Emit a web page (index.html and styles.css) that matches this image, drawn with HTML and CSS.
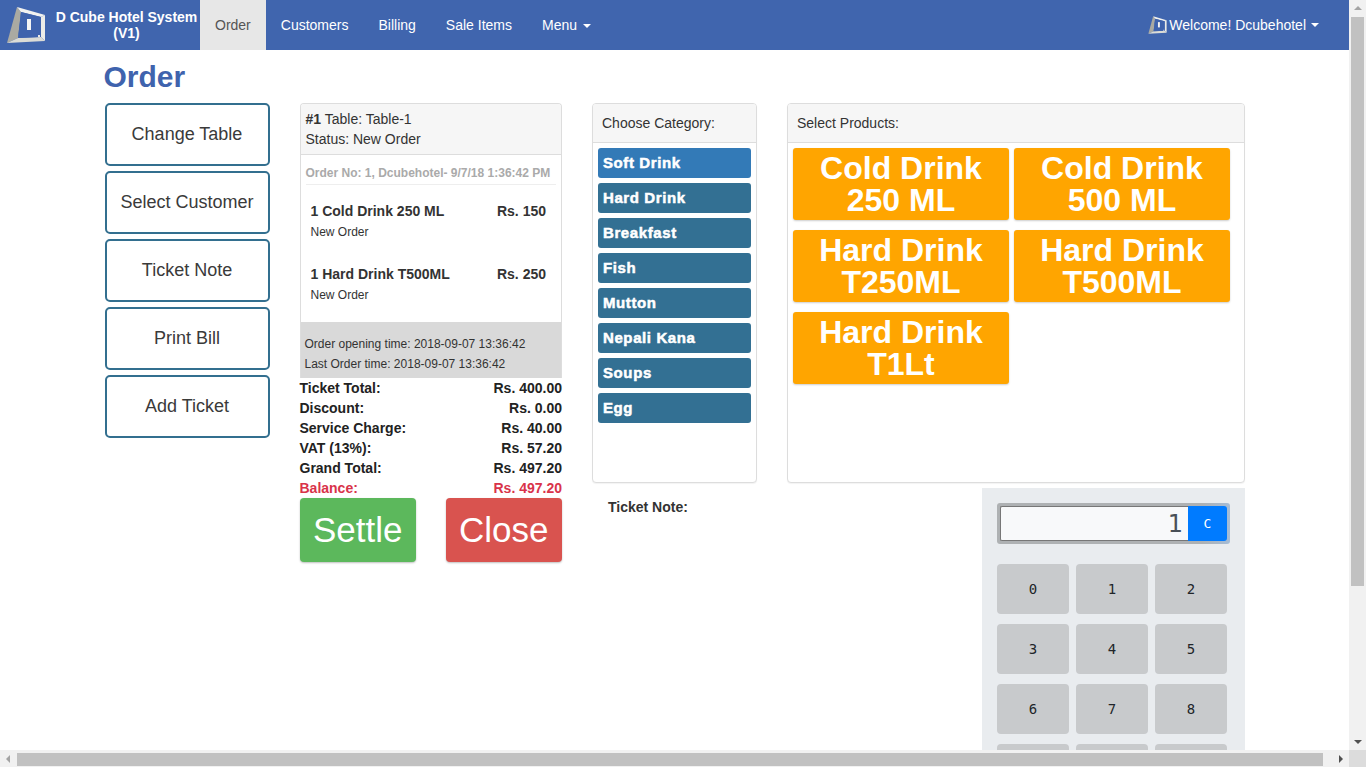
FILE: index.html
```html
<!DOCTYPE html>
<html lang="en">
<head>
    <meta charset="UTF-8">
    <title>D Cube Hotel System - Order</title>
    <link rel="stylesheet" href="styles.css">
</head>
<body>
<svg class="defs" width="0" height="0">
    <symbol id="cube" viewBox="0 0 50 50">
        <polygon points="7,43 17,7 21,12 18,38" fill="#aaaaa2"/>
        <polygon points="17,7 45,15 41,17 21,12" fill="#f2f2f0"/>
        <polygon points="45,15 45,41 41,37 41,17" fill="#ecece8"/>
        <polygon points="7,43 18,38 41,37 45,41" fill="#dcdcd6"/>
        <polygon points="21,12 41,17 41,37 18,38" fill="#3f63ad"/>
        <rect x="27" y="19" width="4" height="11" fill="#f4f4f4"/>
        <rect x="38" y="35" width="2" height="2" fill="#e8e8e8"/>
    </symbol>
</svg>

<div class="viewport">
    <header class="navbar">
        <a class="brand" href="#">
            <svg class="logo"><use href="#cube"/></svg>
            <span class="brand-name">D Cube Hotel System (V1)</span>
        </a>
        <nav class="nav-links">
            <a class="active" href="#">Order</a>
            <a href="#">Customers</a>
            <a href="#">Billing</a>
            <a href="#">Sale Items</a>
            <a href="#">Menu <span class="caret"></span></a>
        </nav>
        <a class="welcome" href="#">
            <svg class="logo-small"><use href="#cube"/></svg>
            Welcome! Dcubehotel <span class="caret"></span>
        </a>
    </header>

    <main class="container">
        <h2 class="page-title">Order</h2>
        <div class="columns">
            <div class="actions">
                <button class="action-btn">Change Table</button>
                <button class="action-btn">Select Customer</button>
                <button class="action-btn">Ticket Note</button>
                <button class="action-btn">Print Bill</button>
                <button class="action-btn">Add Ticket</button>
            </div>

            <div class="ticket">
                <div class="panel">
                    <div class="panel-heading ticket-heading">
                        <div><b>#1</b> Table: Table-1</div>
                        <div>Status: New Order</div>
                    </div>
                    <div class="order-lines">
                        <div class="order-no">Order No: 1, Dcubehotel- 9/7/18 1:36:42 PM</div>
                        <div class="line">
                            <div class="line-top"><b>1 Cold Drink 250 ML</b><b>Rs. 150</b></div>
                            <div class="line-status">New Order</div>
                        </div>
                        <div class="line">
                            <div class="line-top"><b>1 Hard Drink T500ML</b><b>Rs. 250</b></div>
                            <div class="line-status">New Order</div>
                        </div>
                    </div>
                    <div class="times">
                        <div>Order opening time: 2018-09-07 13:36:42</div>
                        <div>Last Order time: 2018-09-07 13:36:42</div>
                    </div>
                </div>
                <div class="totals">
                    <div class="total-row"><span>Ticket Total:</span><span>Rs. 400.00</span></div>
                    <div class="total-row"><span>Discount:</span><span>Rs. 0.00</span></div>
                    <div class="total-row"><span>Service Charge:</span><span>Rs. 40.00</span></div>
                    <div class="total-row"><span>VAT (13%):</span><span>Rs. 57.20</span></div>
                    <div class="total-row"><span>Grand Total:</span><span>Rs. 497.20</span></div>
                    <div class="total-row balance"><span>Balance:</span><span>Rs. 497.20</span></div>
                </div>
                <div class="ticket-buttons">
                    <button class="big-btn settle">Settle</button>
                    <button class="big-btn close">Close</button>
                </div>
            </div>

            <div class="panel category-panel">
                <div class="panel-heading">Choose Category:</div>
                <div class="category-list">
                    <button class="category selected">Soft Drink</button>
                    <button class="category">Hard Drink</button>
                    <button class="category">Breakfast</button>
                    <button class="category">Fish</button>
                    <button class="category">Mutton</button>
                    <button class="category">Nepali Kana</button>
                    <button class="category">Soups</button>
                    <button class="category">Egg</button>
                </div>
            </div>

            <div class="panel product-panel">
                <div class="panel-heading">Select Products:</div>
                <div class="product-grid">
                    <button class="product">Cold Drink 250 ML</button>
                    <button class="product">Cold Drink 500 ML</button>
                    <button class="product">Hard Drink T250ML</button>
                    <button class="product">Hard Drink T500ML</button>
                    <button class="product">Hard Drink T1Lt</button>
                </div>
            </div>

            <div class="note-label">Ticket Note:</div>

            <div class="calculator">
                <div class="display">
                    <div class="display-value">1</div>
                    <button class="clear-btn">C</button>
                </div>
                <div class="keys">
                    <button class="key">0</button>
                    <button class="key">1</button>
                    <button class="key">2</button>
                    <button class="key">3</button>
                    <button class="key">4</button>
                    <button class="key">5</button>
                    <button class="key">6</button>
                    <button class="key">7</button>
                    <button class="key">8</button>
                    <button class="key"></button>
                    <button class="key"></button>
                    <button class="key"></button>
                </div>
            </div>
        </div>
    </main>
</div>

<div class="scroll-v">
    <span class="arrow arrow-up"></span>
    <div class="thumb-v"></div>
    <span class="arrow arrow-down"></span>
</div>
<div class="scroll-h">
    <span class="arrow arrow-left"></span>
    <div class="thumb-h"></div>
    <span class="arrow arrow-right"></span>
</div>
<div class="scroll-corner"></div>
</body>
</html>
```

FILE: styles.css
```css
* {
    box-sizing: border-box;
}
html, body {
    height: 100%;
    overflow: hidden;
}
body {
    margin: 0;
    display: grid;
    grid-template-columns: 1349px 17px;
    grid-template-rows: 750px 17px;
    font-family: "Liberation Sans", Arial, sans-serif;
    font-size: 14px;
    line-height: 20px;
    color: #333;
    background: #fff;
}
button {
    font-family: inherit;
    cursor: pointer;
}
.defs {
    position: absolute;
}
.viewport {
    overflow: hidden;
}

/* scrollbars */
.scroll-v {
    display: flex;
    flex-direction: column;
    align-items: center;
    background: #f1f1f1;
}
.thumb-v {
    flex: none;
    width: 13px;
    height: 569px;
    background: #c1c1c1;
}
.scroll-h {
    display: flex;
    align-items: center;
    background: #f1f1f1;
}
.thumb-h {
    flex: none;
    width: 1306px;
    height: 13px;
    margin-top: 1px;
    background: #c1c1c1;
}
.scroll-corner {
    background: #dcdcdc;
}
.arrow {
    flex: none;
    display: flex;
    width: 17px;
    height: 17px;
}
.arrow::before {
    content: "";
    margin: auto;
    border: 4px solid transparent;
}
.arrow-up::before {
    margin-top: 2px;
    border-bottom-color: #a3a3a3;
}
.arrow-down {
    margin-top: auto;
}
.arrow-down::before {
    margin-bottom: 2px;
    border-top-color: #505050;
}
.arrow-left::before {
    margin-left: 2px;
    border-right-color: #a3a3a3;
}
.arrow-right {
    margin-left: auto;
}
.arrow-right::before {
    margin-right: 2px;
    border-left-color: #505050;
}

/* top bar */
.navbar {
    display: flex;
    align-items: stretch;
    height: 50px;
    background-color: #4065ae;
    color: #fff;
}
.navbar a {
    color: #fff;
    text-decoration: none;
}
.brand {
    display: flex;
    align-items: center;
    width: 200px;
}
.logo {
    flex: none;
    width: 50px;
    height: 50px;
}
.brand-name {
    flex: 1;
    padding-left: 3px;
    font-weight: bold;
    line-height: 16px;
    text-align: center;
}
.nav-links {
    display: flex;
}
.nav-links a {
    padding: 15px;
}
.nav-links a.active {
    background-color: #e7e7e7;
    color: #555;
}
.caret {
    display: inline-block;
    margin-left: 2px;
    vertical-align: middle;
    border-top: 4px solid;
    border-right: 4px solid transparent;
    border-left: 4px solid transparent;
}
.welcome {
    display: flex;
    align-items: center;
    gap: 4px;
    margin-left: auto;
    padding: 0 30px 0 15px;
}
.logo-small {
    width: 24px;
    height: 24px;
    margin-right: -3.5px;
}
.welcome .caret {
    margin-left: 1px;
}

/* page */
.container {
    width: 1170px;
    margin-left: 89.5px;
    padding: 0 15px;
}
.page-title {
    height: 33px;
    margin: 10px 0 10px -1px;
    font-size: 30px;
    line-height: 33px;
    font-weight: bold;
    color: #3f63ad;
}
.columns {
    display: grid;
    grid-template-columns: 165px 262.5px 165px 458px;
    grid-template-rows: 380px auto;
    column-gap: 30px;
    align-items: start;
}
.actions {
    grid-row: 1 / span 2;
    display: flex;
    flex-direction: column;
    gap: 5px;
}
.action-btn {
    height: 63px;
    background: #fff;
    border: 2px solid #336f8f;
    border-radius: 5px;
    font-size: 18px;
    color: #3a3a3a;
}
.panel {
    background: #fff;
    border: 1px solid #ddd;
    border-radius: 4px;
    box-shadow: 0 1px 1px rgba(0, 0, 0, .05);
}
.panel-heading {
    padding: 9px;
    background: #f6f6f6;
    border-bottom: 1px solid #ddd;
    border-radius: 3px 3px 0 0;
}

/* ticket column */
.ticket {
    grid-row: 1 / span 2;
}
.ticket .panel {
    border-bottom: 0;
    border-radius: 4px 4px 0 0;
    box-shadow: none;
}
.ticket-heading {
    padding: 5px;
}
.order-lines {
    height: 167px;
    padding: 0 5px;
}
.order-no {
    padding: 8px 0 1px;
    border-bottom: 1px solid #eee;
    font-size: 12px;
    font-weight: bold;
    color: #aaa;
}
.line {
    padding: 16px 5px 0;
}
.line + .line {
    padding-top: 22px;
}
.line-top {
    display: flex;
    justify-content: space-between;
    padding-right: 5px;
}
.line-status {
    margin-top: 1px;
    font-size: 12px;
}
.times {
    height: 56px;
    padding: 12px 0 0 4px;
    background: #d9d9d9;
    font-size: 12px;
}
.totals {
    font-weight: bold;
    color: #222;
}
.total-row {
    display: flex;
    justify-content: space-between;
}
.balance {
    color: #d9334a;
}
.ticket-buttons {
    display: flex;
    justify-content: space-between;
}
.big-btn {
    width: 116.5px;
    height: 64px;
    padding: 0;
    border: 1px solid transparent;
    border-radius: 4px;
    box-shadow: 0 1px 2px rgba(0, 0, 0, .25);
    font-size: 35px;
    color: #fff;
}
.settle {
    background: #5cb85c;
}
.close {
    background: #d9534f;
}

/* category column */
.category-panel {
    height: 380px;
}
.category-list {
    display: flex;
    flex-direction: column;
    gap: 5px;
    padding: 5px;
}
.category {
    height: 30px;
    padding: 0 5px 2px;
    background: #337093;
    border: 0;
    border-radius: 3px;
    font-size: 15px;
    font-weight: 900;
    letter-spacing: .6px;
    color: #fff;
    text-align: left;
    -webkit-text-stroke: .5px #fff;
}
.category.selected {
    background: #337ab7;
}

/* products */
.product-panel {
    height: 380px;
}
.product-grid {
    display: grid;
    grid-template-columns: 216px 216px;
    column-gap: 5px;
    row-gap: 10px;
    padding: 5px;
}
.product {
    height: 72px;
    padding: 0 25px;
    background: orange;
    border: 0;
    border-radius: 3px;
    box-shadow: 0 1px 2px rgba(0, 0, 0, .2);
    font-size: 32px;
    line-height: 32px;
    font-weight: bold;
    color: #fff;
}

.note-label {
    grid-column: 3;
    grid-row: 2;
    padding: 14px 0 0 16px;
    font-weight: bold;
    white-space: nowrap;
}

/* calculator */
.calculator {
    grid-column: 4;
    grid-row: 2;
    justify-self: end;
    width: 263px;
    height: 263px;
    margin-top: 5px;
    padding: 15px;
    background: #e9ecef;
}
.display {
    display: flex;
    width: 233px;
    height: 41px;
    padding: 3px;
    background: linear-gradient(90deg, #aeb1b3 88%, #a5bcd6);
    border-radius: 3px;
}
.display-value {
    flex: 1;
    padding-right: 5px;
    background: #f8f9fa;
    border: 1px solid #777;
    border-right: 0;
    border-radius: 2px 0 0 2px;
    font-family: "DejaVu Sans", sans-serif;
    font-size: 24px;
    line-height: 35px;
    text-align: right;
    color: #495057;
}
.clear-btn {
    width: 39px;
    padding: 0;
    background: #007bff;
    border: 0;
    border-radius: 0 3px 3px 0;
    font-family: "DejaVu Sans Mono", monospace;
    font-size: 13px;
    color: #fff;
}
.keys {
    display: grid;
    grid-template-columns: repeat(3, 72px);
    grid-auto-rows: 50px;
    column-gap: 7px;
    row-gap: 10px;
    margin-top: 20px;
}
.key {
    padding: 0;
    background: #c8cacc;
    border: 0;
    border-radius: 4px;
    font-family: "DejaVu Sans Mono", monospace;
    font-size: 14px;
    color: #212529;
}
```
